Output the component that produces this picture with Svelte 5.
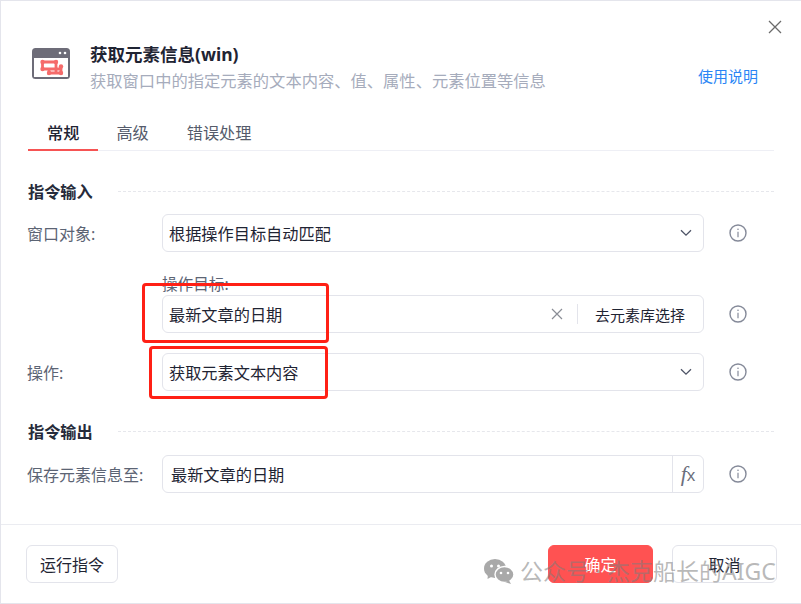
<script>
</script>

{#snippet infoIcon()}
  <svg class="info" width="18" height="18" viewBox="0 0 18 18" fill="none">
    <circle cx="9" cy="9" r="8" stroke="#858a99" stroke-width="1.4"/>
    <path d="M9 7.8V13.2" stroke="#858a99" stroke-width="1.2"/>
    <circle cx="9" cy="5.2" r="0.8" fill="#858a99"/>
  </svg>
{/snippet}

{#snippet chevron()}
  <svg class="chev" width="12" height="8" viewBox="0 0 12 8" fill="none">
    <path d="M1 1.2L6 6.2L11 1.2" stroke="#4d5366" stroke-width="1.3"/>
  </svg>
{/snippet}

<div class="page">
  <header class="head">
    <svg class="logo" width="38" height="31" viewBox="0 0 38 31">
      <rect width="38" height="31" rx="3.5" fill="#6d6c78"/>
      <rect x="2" y="10" width="34" height="19" fill="#fff"/>
      <circle cx="28" cy="5" r="1.3" fill="#fff"/>
      <circle cx="33" cy="5" r="1.3" fill="#fff"/>
      <g fill="none" stroke="#f56b6b" stroke-width="2.8">
        <path d="M10.5 14H24V24"/>
        <path d="M10.5 14V21H29"/>
        <path d="M17 21V25H29V18.5"/>
      </g>
      <g fill="#f56b6b">
        <circle cx="10.5" cy="14" r="2.2"/><circle cx="24" cy="14" r="2.2"/>
        <circle cx="10.5" cy="21" r="2.2"/><circle cx="29" cy="18.5" r="2.2"/>
        <circle cx="17" cy="25" r="2.2"/><circle cx="29" cy="25" r="2.2"/>
      </g>
    </svg>
    <div class="titles">
      <h1>获取元素信息(win)</h1>
      <p>获取窗口中的指定元素的文本内容、值、属性、元素位置等信息</p>
    </div>
    <a class="help" href="#help">使用说明</a>
    <button class="close" aria-label="关闭">
      <svg width="14" height="14" viewBox="0 0 14 14" fill="none">
        <path d="M1 1L13 13M13 1L1 13" stroke="#6b6b6b" stroke-width="1.3"/>
      </svg>
    </button>
  </header>

  <nav class="tabs">
    <span class="tab active">常规</span>
    <span class="tab">高级</span>
    <span class="tab">错误处理</span>
  </nav>

  <main class="form">
    <div class="section"><b>指令输入</b><i></i></div>
    <div class="row first">
      <span class="label">窗口对象:</span>
      <div class="control"><span class="val">根据操作目标自动匹配</span>{@render chevron()}</div>
      {@render infoIcon()}
    </div>
    <div class="sublabel">操作目标:</div>
    <div class="row tight">
      <span class="label"></span>
      <div class="control">
        <span class="val">最新文章的日期</span>
        <svg class="clear" width="12" height="12" viewBox="0 0 12 12" fill="none">
          <path d="M1 1L11 11M11 1L1 11" stroke="#8a8d96" stroke-width="1.2"/>
        </svg>
        <span class="sep"></span>
        <span class="pick">去元素库选择</span>
      </div>
      {@render infoIcon()}
    </div>
    <div class="row op">
      <span class="label">操作:</span>
      <div class="control"><span class="val">获取元素文本内容</span>{@render chevron()}</div>
      {@render infoIcon()}
    </div>
    <div class="section two"><b>指令输出</b><i></i></div>
    <div class="row save">
      <span class="label">保存元素信息至:</span>
      <div class="control"><span class="val out">最新文章的日期</span><span class="fx"><em>f</em>x</span></div>
      {@render infoIcon()}
    </div>
  </main>

  <footer class="foot">
    <button class="btn run">运行指令</button>
    <button class="btn ok">确定</button>
    <button class="btn cancel">取消</button>
  </footer>

  <div class="mark m1"></div>
  <div class="mark m2"></div>

  <div class="wm">
    <svg width="30" height="25" viewBox="0 0 30 25">
      <ellipse cx="11" cy="9.5" rx="11" ry="9.5" fill="#a9a9a9"/>
      <path d="M4 15L3.5 20L9 17Z" fill="#a9a9a9"/>
      <ellipse cx="20.5" cy="15.5" rx="9.5" ry="8" fill="#a9a9a9" stroke="#fff" stroke-width="1.4"/>
      <path d="M25 21.5L27 25L21 23Z" fill="#a9a9a9"/>
      <circle cx="7.5" cy="7" r="1.5" fill="#fff"/><circle cx="14.5" cy="7" r="1.5" fill="#fff"/>
      <circle cx="17" cy="14" r="1.3" fill="#fff"/><circle cx="24" cy="14" r="1.3" fill="#fff"/>
    </svg>
    <span>公众号 · 杰克船长的AIGC</span>
  </div>
</div>

<style>
  :global(body) { margin: 0; background: #fff; }
  .page {
    position: relative;
    width: 801px;
    height: 604px;
    box-sizing: border-box;
    border: 1px solid #e4e5ec;
    border-right: 0;
    overflow: hidden;
    font-family: "Noto Sans", "Noto Sans CJK SC", sans-serif;
    font-size: 16.2px;
    color: #1f2433;
    display: flex;
    flex-direction: column;
  }
  .head {
    position: relative;
    height: 122px;
    display: flex;
    align-items: flex-start;
    padding: 47px 43px 0 31px;
    box-sizing: border-box;
  }
  .logo { flex: none; }
  .titles { margin-left: 20px; flex: 1; margin-top: -6px; }
  h1 { margin: 0; font-size: 17.5px; font-weight: 700; line-height: 24px; color: #1f2433; }
  p { margin: 3px 0 0; font-size: 16.3px; line-height: 24px; color: #a6acbc; white-space: nowrap; }
  .help { color: #2a85f5; font-size: 15px; text-decoration: none; line-height: 20px; margin-top: 18px; }
  .close { position: absolute; right: 19px; top: 19px; padding: 0; border: 0; background: none; line-height: 0; }

  .tabs {
    margin: 0 27px;
    height: 27px;
    display: flex;
    border-bottom: 1px solid #eeeff5;
  }
  .tab { padding: 0 19px; line-height: 20px; color: #555b6b; white-space: nowrap; }
  .tab.active { color: #1f2433; font-weight: 500; border-bottom: 2px solid #f65353; height: 26px; margin-right: -1px; }
  .tab:nth-child(3) { margin-left: 0; }

  .form { padding: 0 27px; flex: 1; }
  .section { display: flex; align-items: center; gap: 25px; height: 22px; margin-top: 29px; }
  .section b { font-weight: 700; font-size: 16.2px; color: #262b3a; white-space: nowrap; }
  .section i { flex: 1; border-top: 1px dashed #e6e7ec; }
  .section.two { margin-top: 29px; }

  .row { display: grid; grid-template-columns: 134px 542px 1fr; align-items: center; }
  .row.first { margin-top: 12px; }
  .row.tight { margin-top: 0; }
  .row.op { margin-top: 20px; }
  .row.save { margin-top: 13px; }
  .label { font-size: 16px; color: #5c6474; white-space: nowrap; margin-left: -1px; }
  .sublabel { margin: 21px 0 0 134px; height: 22px; line-height: 22px; font-size: 15.6px; color: #5c6474; }

  .control {
    height: 38px;
    box-sizing: border-box;
    border: 1px solid #e3e4eb;
    border-radius: 6px;
    display: flex;
    align-items: center;
    padding: 0 11px 0 6px;
    background: #fff;
  }
  .val { flex: 1; white-space: nowrap; }
  .val.out { padding-left: 2px; }
  .chev { flex: none; }
  .info { justify-self: start; margin-left: 25px; }
  .clear { flex: none; margin-right: 14px; }
  .sep { width: 1px; height: 20px; background: #e3e4eb; margin-right: 17px; }
  .pick { font-size: 15px; }
  .row.tight .control { padding-right: 18px; }
  .row.save .control { padding-right: 0; }
  .fx {
    width: 30px;
    height: 36px;
    line-height: 36px;
    text-align: center;
    border-left: 1px solid #e3e4eb;
    font-family: "Liberation Sans", sans-serif;
    font-size: 17px;
    color: #6b6f7c;
  }
  .fx em { font-family: "Liberation Serif", serif; font-size: 22px; font-style: italic; }

  .foot {
    height: 79px;
    box-sizing: border-box;
    border-top: 1px solid #ebecf1;
    padding: 20px 24px 0 25px;
    display: flex;
    align-items: flex-start;
  }
  .btn {
    height: 38px;
    border-radius: 6px;
    font: inherit;
    font-size: 16px;
    border: 1px solid #e3e4eb;
    background: #fff;
    color: #1f2433;
    padding: 0;
  }
  .run { width: 92px; margin-right: auto; }
  .ok { width: 105px; background: #ff5252; border-color: #ff5252; color: #fff; margin-right: 19px; }
  .cancel { width: 105px; }

  .mark { position: absolute; box-sizing: border-box; border: 3.5px solid #ff2015; border-radius: 4px; }
  .m1 { left: 141px; top: 282px; width: 187px; height: 60px; }
  .m2 { left: 148px; top: 345px; width: 179px; height: 53px; }

  .wm {
    position: absolute;
    left: 483px;
    top: 557px;
    display: flex;
    align-items: center;
    gap: 6px;
    color: rgba(125, 125, 125, 0.55);
    font-size: 23px;
    line-height: 26px;
    white-space: nowrap;
  }
</style>
